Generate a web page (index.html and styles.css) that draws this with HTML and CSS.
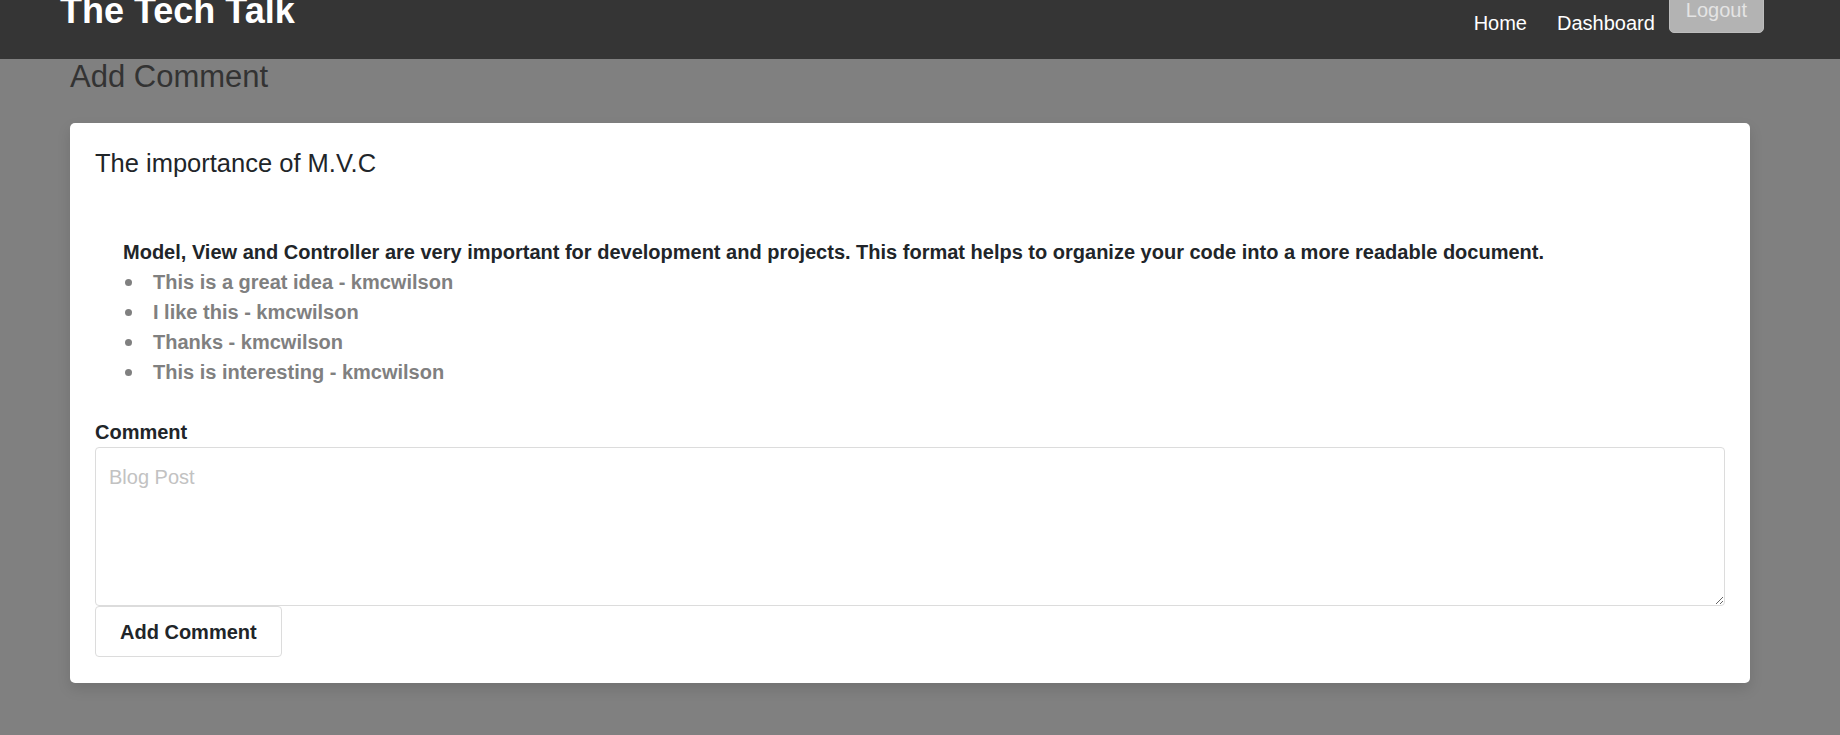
FILE: index.html
```html
<!DOCTYPE html>
<html lang="en">
<head>
<meta charset="utf-8">
<title>The Tech Talk</title>
<link rel="stylesheet" href="styles.css">
</head>
<body>
<header class="site-header">
  <h1 class="brand">The Tech Talk</h1>
  <nav class="nav">
    <a class="nav-link" href="#">Home</a>
    <a class="nav-link" href="#">Dashboard</a>
    <button class="logout" type="button">Logout</button>
  </nav>
</header>
<main class="main">
  <h2 class="page-title">Add Comment</h2>
  <section class="card">
    <h3 class="post-title">The importance of M.V.C</h3>
    <div class="post-body">
      <p class="post-text">Model, View and Controller are very important for development and projects. This format helps to organize your code into a more readable document.</p>
      <ul class="comments">
        <li class="comment"><span class="dot"></span>This is a great idea - kmcwilson</li>
        <li class="comment"><span class="dot"></span>I like this - kmcwilson</li>
        <li class="comment"><span class="dot"></span>Thanks - kmcwilson</li>
        <li class="comment"><span class="dot"></span>This is interesting - kmcwilson</li>
      </ul>
    </div>
    <form class="comment-form">
      <label class="label" for="comment">Comment</label>
      <textarea id="comment" class="textarea" placeholder="Blog Post"></textarea>
      <button class="submit" type="button">Add Comment</button>
    </form>
  </section>
</main>
</body>
</html>
```
FILE: styles.css
```css
html, body {
  margin: 0;
  padding: 0;
}
body {
  background: #808080;
  font-family: "Liberation Sans", Arial, sans-serif;
  color: #212529;
  min-height: 735px;
}
.site-header {
  height: 59px;
  background: #353535;
  display: flex;
  justify-content: space-between;
  align-items: flex-start;
  padding: 0 76px 0 60px;
  overflow: hidden;
  box-sizing: border-box;
}
.brand {
  margin: -7px 0 0 0;
  font-size: 36px;
  line-height: 36px;
  font-weight: 700;
  color: #ffffff;
}
.nav {
  display: flex;
  align-items: flex-start;
}
.nav-link {
  color: #ffffff;
  text-decoration: none;
  font-size: 20px;
  line-height: 30px;
  margin-top: 8px;
  margin-right: 30px;
}
.nav-link:nth-child(2) {
  margin-right: 14px;
}
.logout {
  margin-top: -13px;
  font-family: inherit;
  font-size: 20px;
  line-height: 30px;
  padding: 7px 16px;
  background: #b3b3b3;
  color: #e4e4e4;
  border: 1px solid #bdbdbd;
  border-radius: 5px;
}
.main {
  padding: 0 90px 40px 70px;
}
.page-title {
  margin: 0;
  font-size: 31px;
  line-height: 36px;
  font-weight: 400;
  color: #333333;
}
.card {
  margin-top: 28px;
  background: #ffffff;
  border-radius: 5px;
  padding: 25px 25px 26px;
  box-shadow: 0 6px 14px rgba(0, 0, 0, 0.12);
}
.post-title {
  margin: 0;
  font-size: 25.5px;
  line-height: 30px;
  font-weight: 400;
  color: #212529;
}
.post-body {
  margin-top: 59px;
  padding-left: 28px;
  font-size: 20px;
  line-height: 30px;
  font-weight: 700;
}
.post-text {
  margin: 0;
}
.comments {
  margin: 0;
  padding: 0;
  list-style: none;
  color: #808080;
}
.comment {
  display: flex;
  align-items: center;
}
.dot {
  width: 7px;
  height: 7px;
  border-radius: 50%;
  background: #808080;
  margin: 0 21px 0 2px;
  flex: none;
}
.comment-form {
  margin-top: 30px;
  display: flex;
  flex-direction: column;
  align-items: flex-start;
}
.label {
  font-size: 20px;
  line-height: 30px;
  font-weight: 700;
  color: #212529;
}
.textarea {
  display: block;
  box-sizing: border-box;
  width: 100%;
  height: 159px;
  padding: 14px 13px;
  font-family: inherit;
  font-size: 20px;
  line-height: 30px;
  border: 1px solid #dcdcdc;
  border-radius: 4px;
  color: #212529;
  background: #ffffff;
  margin: 0;
}
.textarea::placeholder {
  color: #c2c2c2;
}
.submit {
  margin: 0;
  font-family: inherit;
  font-size: 20px;
  line-height: 29px;
  font-weight: 700;
  padding: 11px 24px 9px;
  background: #ffffff;
  color: #212529;
  border: 1px solid #dcdcdc;
  border-radius: 4px;
}
```
